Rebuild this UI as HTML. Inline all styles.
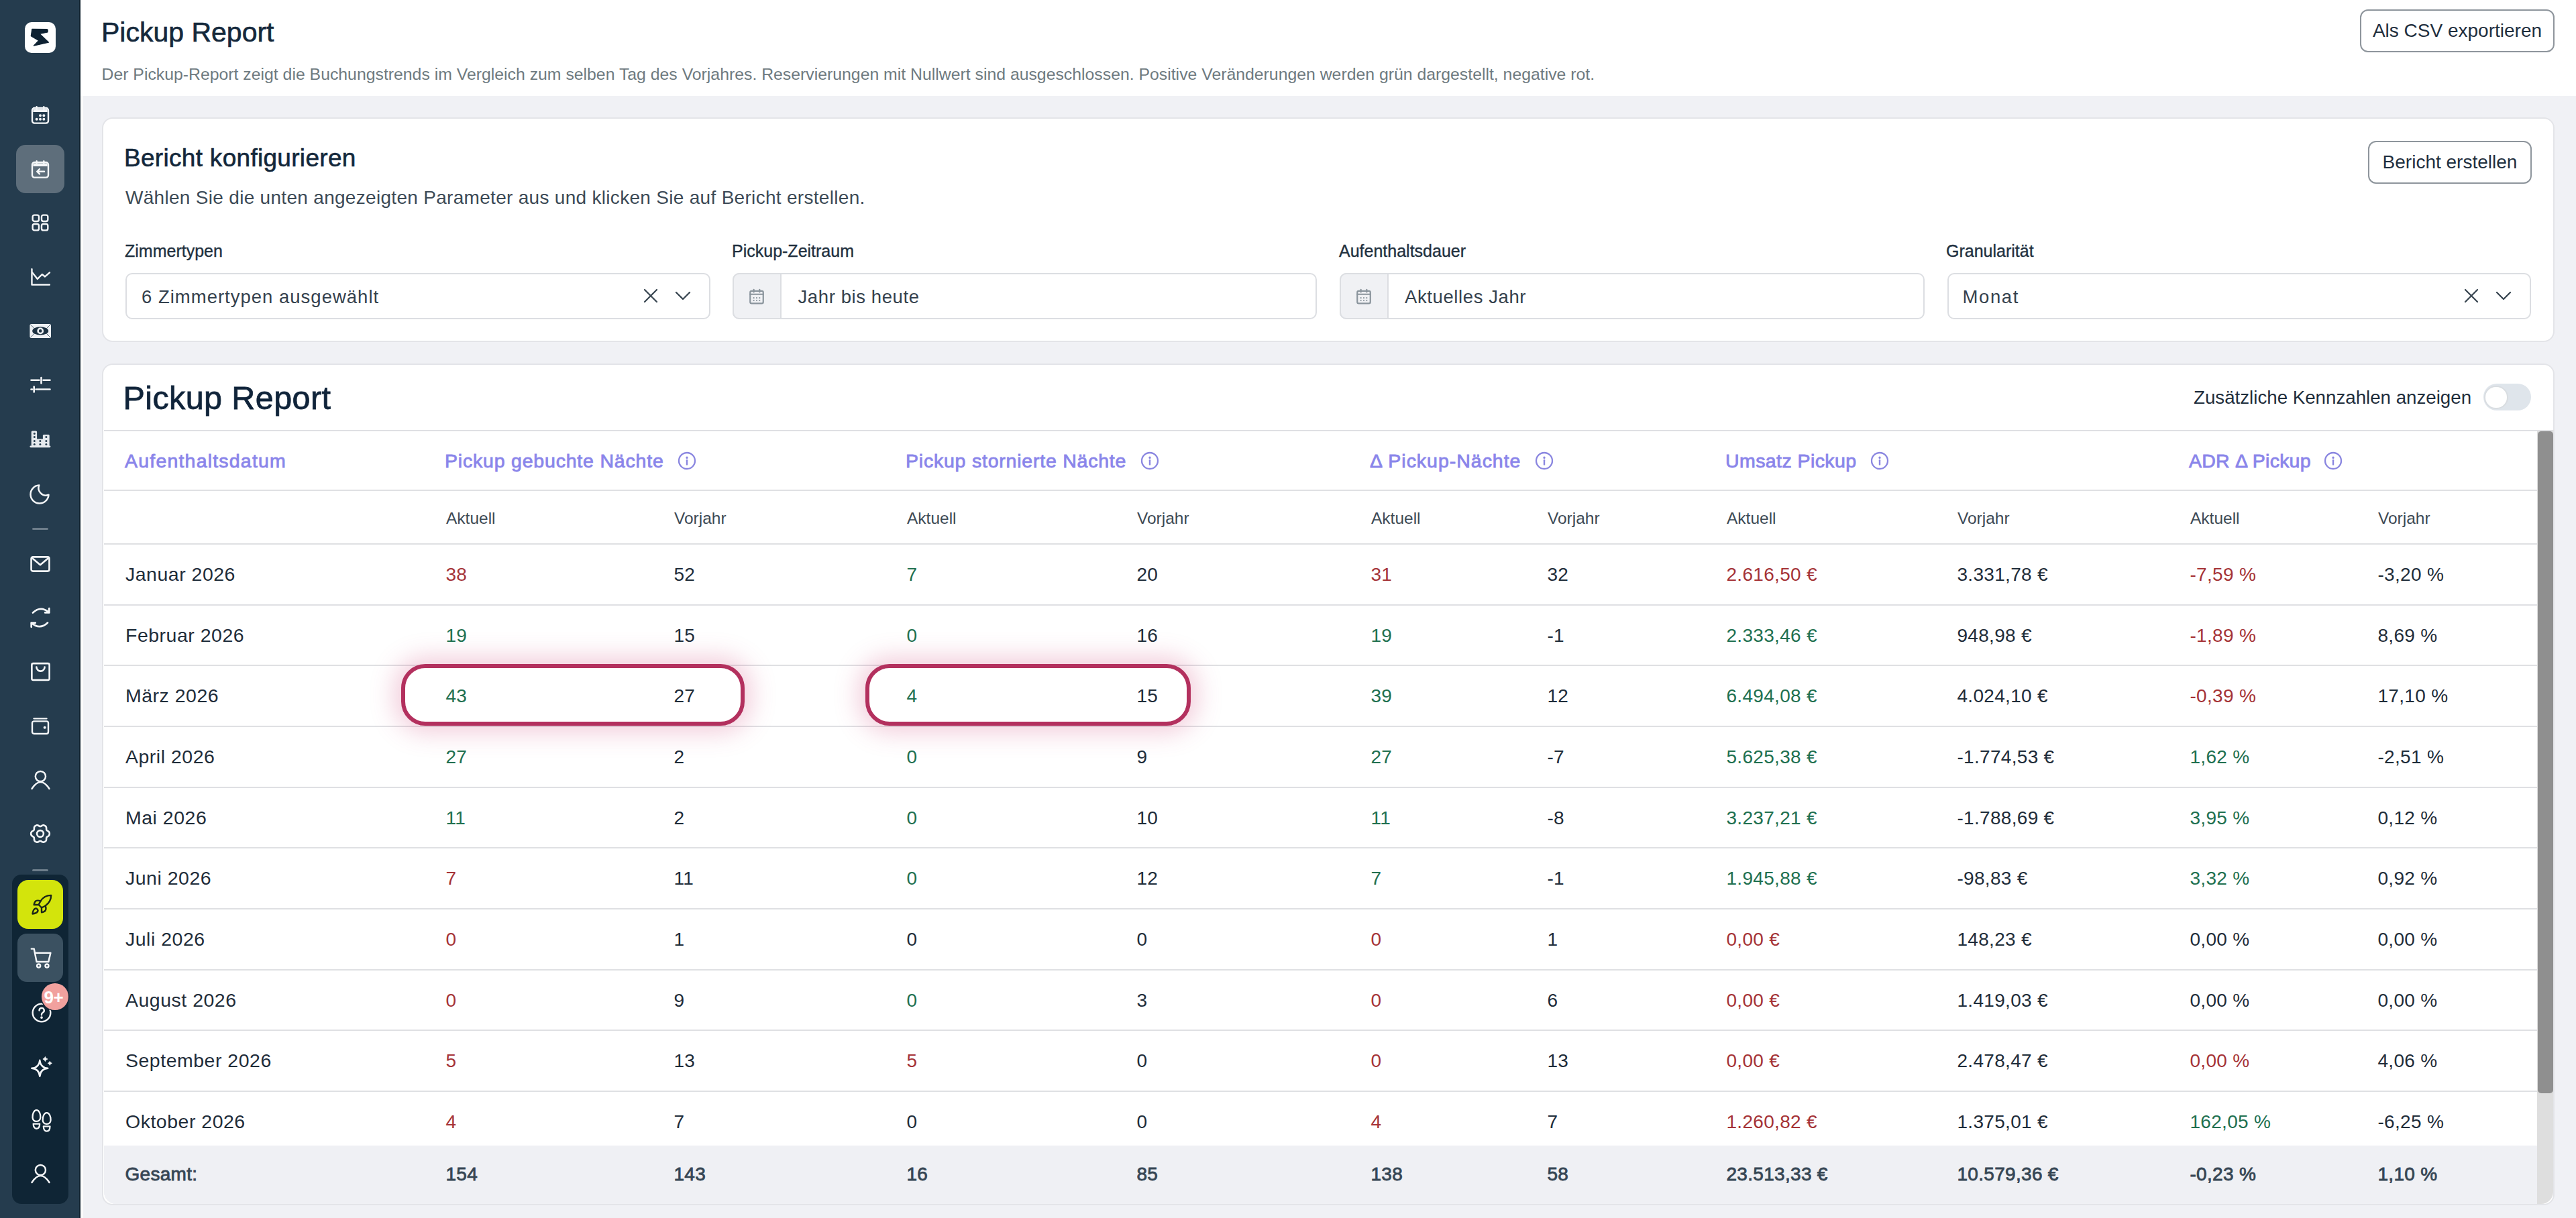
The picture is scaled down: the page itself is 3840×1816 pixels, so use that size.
<!DOCTYPE html>
<html><head><meta charset="utf-8"><title>Pickup Report</title>
<style>
html,body{margin:0;padding:0;}
body{width:3840px;height:1816px;position:relative;overflow:hidden;background:#f0f1f5;font-family:"Liberation Sans", sans-serif;}
.t{position:absolute;white-space:nowrap;}
.b{position:absolute;box-sizing:border-box;}
svg{position:absolute;overflow:visible;}
.med{-webkit-text-stroke:0.6px currentColor;}
.semi{-webkit-text-stroke:0.35px currentColor;}
.semib{-webkit-text-stroke:0.8px currentColor;}
</style></head><body>
<div class="b" style="left:0px;top:0px;width:120px;height:1816px;background:#253c4e;"></div>
<div class="b" style="left:118px;top:0px;width:2px;height:1816px;background:#10222f;"></div>
<div class="b" style="left:37px;top:33px;width:46px;height:46px;background:#fff;border-radius:10px;"></div>
<svg style="left:37px;top:33px" width="46" height="46" viewBox="0 0 46 46"><path d="M10.8 10.4 L33 10.6 Q34.3 10.8 34.2 12.4 L34 15 L22.2 17.5 L35.5 30.1 L13.3 35.2 L20.7 27.4 L9.3 20.7 Z" fill="#0e2232" stroke="#0e2232" stroke-width="1.2" stroke-linejoin="round"/></svg>
<div class="b" style="left:24px;top:216px;width:72px;height:72px;background:#5e6e7b;border-radius:14px;"></div>
<svg style="left:44.0px;top:155.0px" width="32" height="32" viewBox="0 0 24 24" fill="none" stroke="#f4f6f8" stroke-width="1.80" stroke-linecap="round" stroke-linejoin="round"><rect x="3" y="4.5" width="18" height="17" rx="2.5"/><path d="M4 7.3h16" stroke-width="3.4" stroke-linecap="butt"/><path d="M8 3.2v2M16 3.2v2"/><path d="M12 13h.01M16 13h.01M8 17h.01M12 17h.01M16 17h.01" stroke-width="3"/></svg>
<svg style="left:44.0px;top:236.0px" width="32" height="32" viewBox="0 0 24 24" fill="none" stroke="#f4f6f8" stroke-width="1.80" stroke-linecap="round" stroke-linejoin="round"><rect x="3" y="4.5" width="18" height="17" rx="2.5"/><path d="M4 7.3h16" stroke-width="3.4" stroke-linecap="butt"/><path d="M8 3.2v2M16 3.2v2"/><path d="M16.5 14.8H8.5M11.2 12 8.4 14.8l2.8 2.8"/></svg>
<svg style="left:44.0px;top:316.0px" width="32" height="32" viewBox="0 0 24 24" fill="none" stroke="#f4f6f8" stroke-width="1.80" stroke-linecap="round" stroke-linejoin="round"><rect x="3.5" y="3.5" width="7" height="7" rx="2"/><rect x="13.5" y="3.5" width="7" height="7" rx="2"/><rect x="3.5" y="13.5" width="7" height="7" rx="2"/><rect x="13.5" y="13.5" width="7" height="7" rx="2"/></svg>
<svg style="left:44.0px;top:397.0px" width="32" height="32" viewBox="0 0 24 24" fill="none" stroke="#f4f6f8" stroke-width="1.80" stroke-linecap="round" stroke-linejoin="round"><path d="M2.6 3.2v17.4h19.8"/><path d="M3.2 7.2l5.7 7 5.2-5.2 3.2 2.6 5.2-4.6"/></svg>
<svg style="left:40px;top:474px" width="40" height="40" viewBox="0 0 40 40"><rect x="4.4" y="9" width="31.6" height="21" rx="2.5" fill="#eef1f4"/><path d="M6 10.5l5 5M34.5 10.5l-5 5M6 28.5l5-5M34.5 28.5l-5-5" stroke="#253c4e" stroke-width="0.8"/><ellipse cx="20.2" cy="19.4" rx="12" ry="6.2" fill="#1d3242"/><circle cx="20.2" cy="19.4" r="3.6" fill="none" stroke="#eef1f4" stroke-width="2.6"/></svg>
<svg style="left:40px;top:554px" width="40" height="40" viewBox="0 0 40 40" fill="none" stroke="#f4f6f8" stroke-width="2.6" stroke-linecap="round"><path d="M6.5 12.7H18.5M24.5 12.7H34.5M21.5 9V17.5"/><path d="M6.5 26.5H8M13.5 26.5H34.5M10.7 22.5V30.5"/></svg>
<svg style="left:40px;top:636px" width="40" height="40" viewBox="0 0 40 40"><g fill="#e6eaee"><rect x="6.7" y="6.4" width="8.4" height="23" rx="1.5"/><rect x="14.7" y="18.5" width="9.6" height="11" rx="0.5"/><rect x="23.9" y="12" width="9.8" height="17.4" rx="1.5"/><rect x="4.4" y="28.4" width="31" height="2.8" rx="1.4"/></g><g fill="#253c4e"><circle cx="11.3" cy="10.4" r="1.5"/><circle cx="11.3" cy="15.6" r="1.5"/><circle cx="11.3" cy="21.4" r="1.5"/><circle cx="11.3" cy="26.4" r="1.5"/><circle cx="19.9" cy="21.4" r="1.5"/><circle cx="19.9" cy="26.4" r="1.5"/><circle cx="28.9" cy="15.6" r="1.5"/><circle cx="28.9" cy="21.4" r="1.5"/><circle cx="28.9" cy="26.4" r="1.5"/></g></svg>
<svg style="left:40px;top:717px" width="40" height="40" viewBox="0 0 40 40" fill="none" stroke="#f4f6f8" stroke-width="2.5" stroke-linejoin="round"><path d="M18.24 6.52A13.5 13.5 0 1 0 32.48 20.76A11 11 0 0 1 18.24 6.52Z"/></svg>
<div class="b" style="left:48px;top:787px;width:24px;height:3px;background:#6e7e8b;border-radius:2px;"></div>
<svg style="left:43.0px;top:823.5px" width="34" height="34" viewBox="0 0 24 24" fill="none" stroke="#f4f6f8" stroke-width="1.84" stroke-linecap="round" stroke-linejoin="round"><rect x="2.5" y="4.5" width="19" height="15" rx="1.8"/><path d="M3.2 5.5l8.8 7.3 8.8-7.3"/></svg>
<svg style="left:40px;top:901px" width="40" height="40" viewBox="0 0 40 40" fill="none" stroke="#f4f6f8" stroke-width="2.7" stroke-linecap="round" stroke-linejoin="round"><path d="M9 12.5Q20.5 1.5 33 12"/><path d="M33.3 6.2V12.4H27.2"/><path d="M31 27.5Q19.5 38.5 7 28"/><path d="M6.7 33.8V27.6H12.8"/></svg>
<svg style="left:42.5px;top:984.0px" width="35" height="35" viewBox="0 0 24 24" fill="none" stroke="#f4f6f8" stroke-width="1.78" stroke-linecap="round" stroke-linejoin="round"><rect x="3" y="3.5" width="18" height="17" rx="1.5"/><path d="M7.8 7.2a4.2 4.2 0 0 0 8.4 0"/></svg>
<svg style="left:44.0px;top:1066.0px" width="32" height="32" viewBox="0 0 24 24" fill="none" stroke="#f4f6f8" stroke-width="1.80" stroke-linecap="round" stroke-linejoin="round"><path d="M5 4h14"/><rect x="3" y="7" width="18" height="14" rx="2"/><path d="M17 14h.01" stroke-width="3"/></svg>
<svg style="left:40px;top:1143px" width="40" height="40" viewBox="0 0 40 40" fill="none" stroke="#f4f6f8" stroke-width="2.5" stroke-linecap="round"><circle cx="20.4" cy="14.5" r="7.6"/><path d="M7.5 33Q20.5 13 33.5 33"/></svg>
<svg style="left:39.8px;top:1223.3px" width="40" height="40" viewBox="0 0 40 40" fill="none" stroke="#f4f6f8" stroke-width="2.6" stroke-linejoin="round"><path d="M33.80 20.00 L33.79 20.48 L33.74 20.96 L33.64 21.43 L33.47 21.89 L33.23 22.33 L32.92 22.75 L32.55 23.13 L32.12 23.48 L31.66 23.79 L31.20 24.08 L30.75 24.34 L30.33 24.60 L29.96 24.86 L29.67 25.14 L29.44 25.45 L29.28 25.80 L29.19 26.20 L29.15 26.65 L29.13 27.13 L29.13 27.66 L29.11 28.21 L29.07 28.76 L28.98 29.30 L28.84 29.82 L28.64 30.29 L28.38 30.72 L28.06 31.10 L27.70 31.42 L27.31 31.70 L26.90 31.95 L26.48 32.18 L26.04 32.38 L25.58 32.53 L25.10 32.61 L24.60 32.63 L24.08 32.56 L23.56 32.43 L23.05 32.24 L22.55 32.00 L22.07 31.74 L21.61 31.48 L21.18 31.24 L20.77 31.06 L20.38 30.94 L20.00 30.90 L19.62 30.94 L19.23 31.06 L18.82 31.24 L18.39 31.48 L17.93 31.74 L17.45 32.00 L16.95 32.24 L16.44 32.43 L15.92 32.56 L15.40 32.63 L14.90 32.61 L14.42 32.53 L13.96 32.38 L13.52 32.18 L13.10 31.95 L12.69 31.70 L12.30 31.42 L11.94 31.10 L11.62 30.72 L11.36 30.29 L11.16 29.82 L11.02 29.30 L10.93 28.76 L10.89 28.21 L10.87 27.66 L10.87 27.13 L10.85 26.65 L10.81 26.20 L10.72 25.80 L10.56 25.45 L10.33 25.14 L10.04 24.86 L9.67 24.60 L9.25 24.34 L8.80 24.08 L8.34 23.79 L7.88 23.48 L7.45 23.13 L7.08 22.75 L6.77 22.33 L6.53 21.89 L6.36 21.43 L6.26 20.96 L6.21 20.48 L6.20 20.00 L6.21 19.52 L6.26 19.04 L6.36 18.57 L6.53 18.11 L6.77 17.67 L7.08 17.25 L7.45 16.87 L7.88 16.52 L8.34 16.21 L8.80 15.92 L9.25 15.66 L9.67 15.40 L10.04 15.14 L10.33 14.86 L10.56 14.55 L10.72 14.20 L10.81 13.80 L10.85 13.35 L10.87 12.87 L10.87 12.34 L10.89 11.79 L10.93 11.24 L11.02 10.70 L11.16 10.18 L11.36 9.71 L11.62 9.28 L11.94 8.90 L12.30 8.58 L12.69 8.30 L13.10 8.05 L13.52 7.82 L13.96 7.62 L14.42 7.47 L14.90 7.39 L15.40 7.37 L15.92 7.44 L16.44 7.57 L16.95 7.76 L17.45 8.00 L17.93 8.26 L18.39 8.52 L18.82 8.76 L19.23 8.94 L19.62 9.06 L20.00 9.10 L20.38 9.06 L20.77 8.94 L21.18 8.76 L21.61 8.52 L22.07 8.26 L22.55 8.00 L23.05 7.76 L23.56 7.57 L24.08 7.44 L24.60 7.37 L25.10 7.39 L25.58 7.47 L26.04 7.62 L26.48 7.82 L26.90 8.05 L27.31 8.30 L27.70 8.58 L28.06 8.90 L28.38 9.28 L28.64 9.71 L28.84 10.18 L28.98 10.70 L29.07 11.24 L29.11 11.79 L29.13 12.34 L29.13 12.87 L29.15 13.35 L29.19 13.80 L29.28 14.20 L29.44 14.55 L29.67 14.86 L29.96 15.14 L30.33 15.40 L30.75 15.66 L31.20 15.92 L31.66 16.21 L32.12 16.52 L32.55 16.87 L32.92 17.25 L33.23 17.67 L33.47 18.11 L33.64 18.57 L33.74 19.04 L33.79 19.52 L33.80 20.00Z"/><circle cx="20" cy="20" r="4.9"/></svg>
<div class="b" style="left:48px;top:1296px;width:24px;height:3px;background:#6e7e8b;border-radius:2px;"></div>
<div class="b" style="left:18px;top:1304px;width:84px;height:491px;background:#0f2535;border-radius:14px;"></div>
<div class="b" style="left:26px;top:1312px;width:68px;height:73px;background:#d3e40c;border-radius:16px;"></div>
<svg style="left:44.5px;top:1331.5px" width="34" height="34" viewBox="0 0 24 24" fill="none" stroke="#1c2618" stroke-width="1.69" stroke-linecap="round" stroke-linejoin="round"><path d="M4.5 16.5c-1.5 1.26-2 5-2 5s3.74-.5 5-2c.71-.84.7-2.13-.09-2.91a2.18 2.18 0 0 0-2.91-.09z"/><path d="M12 15l-3-3a22 22 0 0 1 2-3.95A12.88 12.88 0 0 1 22 2c0 2.72-.78 7.5-6 11a22.35 22.35 0 0 1-4 2z"/><path d="M9 12H4s.55-3.03 2-4c1.62-1.08 5 0 5 0"/><path d="M12 15v5s3.03-.55 4-2c1.08-1.62 0-5 0-5"/></svg>
<div class="b" style="left:26px;top:1392px;width:68px;height:72px;background:#3b5161;border-radius:14px;"></div>
<svg style="left:42.5px;top:1409.5px" width="37" height="37" viewBox="0 0 24 24" fill="none" stroke="#f4f6f8" stroke-width="1.62" stroke-linecap="round" stroke-linejoin="round"><path d="M2.5 3h2.5l2.5 12.5h11.5l2-8.5H6"/><circle cx="9.5" cy="19.5" r="1.6"/><circle cx="17.5" cy="19.5" r="1.6"/></svg>
<svg style="left:46.0px;top:1494.0px" width="32" height="32" viewBox="0 0 24 24" fill="none" stroke="#f4f6f8" stroke-width="1.80" stroke-linecap="round" stroke-linejoin="round"><circle cx="12" cy="12" r="10"/><path d="M9.4 9.4a2.7 2.7 0 1 1 3.9 2.4c-.8.5-1.3 1.1-1.3 2v.6"/><path d="M12 17.3v.01" stroke-width="2.8"/></svg>
<div class="b" style="left:62px;top:1466px;width:40px;height:40px;background:#f1a19e;border-radius:20px;box-shadow:0 0 0 1.5px #0f2535;"></div>
<div class="t" style="left:65.5px;top:1474.0px;font-size:26px;line-height:26px;color:#fff;font-weight:700;letter-spacing:-0.5px;">9+</div>
<svg style="left:40px;top:1570px" width="40" height="40" viewBox="0 0 40 40" fill="none" stroke="#f4f6f8" stroke-width="2.4" stroke-linejoin="round"><path d="M19.3 10.8Q20.3 21.8 31.3 22.8Q20.3 23.8 19.3 34.8Q18.3 23.8 7.3 22.8Q18.3 21.8 19.3 10.8Z"/><path d="M27.4 5.5Q27.9 8.5 30.9 9Q27.9 9.5 27.4 12.5Q26.9 9.5 23.9 9Q26.9 8.5 27.4 5.5Z" fill="#f4f6f8" stroke-width="1"/><path d="M34.3 12.3Q34.7 14.9 37.3 15.3Q34.7 15.7 34.3 18.3Q33.9 15.7 31.3 15.3Q33.9 14.9 34.3 12.3Z" fill="#f4f6f8" stroke-width="1"/></svg>
<svg style="left:45.0px;top:1654.0px" width="34" height="34" viewBox="0 0 24 24" fill="none" stroke="#f4f6f8" stroke-width="1.62" stroke-linecap="round" stroke-linejoin="round"><path d="M6.65 0.8C9.5 0.8 11 5 10.8 8.5C10.6 11.2 9 12.6 6.65 12.6C4.3 12.6 2.7 11.2 2.5 8.5C2.3 5 3.8 0.8 6.65 0.8Z"/><path d="M3.3 15.2H10C10 18.5 8.6 20.3 6.65 20.3C4.7 20.3 3.3 18.5 3.3 15.2Z"/><path d="M17.4 3.6C20.2 3.6 21.8 7.8 21.6 11.3C21.4 14 19.8 15.4 17.4 15.4C15 15.4 13.4 14 13.2 11.3C13 7.8 14.6 3.6 17.4 3.6Z"/><path d="M14 17.9H20.8C20.8 21.3 19.3 23.1 17.4 23.1C15.5 23.1 14 21.3 14 17.9Z"/></svg>
<svg style="left:40px;top:1730px" width="40" height="40" viewBox="0 0 40 40" fill="none" stroke="#f4f6f8" stroke-width="2.5" stroke-linecap="round"><circle cx="20.4" cy="14.5" r="7.6"/><path d="M7.5 33Q20.5 13 33.5 33"/></svg>
<div class="b" style="left:120px;top:0px;width:3720px;height:143px;background:#fff;"></div>
<div class="b" style="left:120px;top:143px;width:4px;height:1673px;background:#fbfbfb;"></div>
<div class="t med" style="left:151.0px;top:28.1px;font-size:41px;line-height:41px;color:#14283b;">Pickup Report</div>
<div class="t" style="left:151.5px;top:98.8px;font-size:24.8px;line-height:24.8px;color:#6e7a80;">Der Pickup-Report zeigt die Buchungstrends im Vergleich zum selben Tag des Vorjahres. Reservierungen mit Nullwert sind ausgeschlossen. Positive Veränderungen werden grün dargestellt, negative rot.</div>
<div class="b" style="left:3518px;top:14px;width:290px;height:64px;border:2px solid #8e959c;border-radius:12px;background:#fff;"></div>
<div class="t" style="left:3518px;top:14px;width:290px;height:64px;line-height:64px;text-align:center;font-size:28px;color:#1f2f3e;">Als CSV exportieren</div>
<div class="b" style="left:152px;top:175px;width:3656px;height:335px;background:#fff;border:2px solid #e3e4e8;border-radius:16px;"></div>
<div class="t med" style="left:185.0px;top:216.7px;font-size:37px;line-height:37px;color:#14283b;letter-spacing:0.3px;">Bericht konfigurieren</div>
<div class="t" style="left:187.0px;top:281.3px;font-size:28px;line-height:28px;color:#3c4a56;letter-spacing:0.3px;">Wählen Sie die unten angezeigten Parameter aus und klicken Sie auf Bericht erstellen.</div>
<div class="b" style="left:3530px;top:210px;width:244px;height:64px;border:2px solid #8e959c;border-radius:12px;background:#fff;"></div>
<div class="t" style="left:3530px;top:210px;width:244px;height:64px;line-height:64px;text-align:center;font-size:28px;color:#1f2f3e;">Bericht erstellen</div>
<div class="t semi" style="left:186.0px;top:362.1px;font-size:25px;line-height:25px;color:#22313f;">Zimmertypen</div>
<div class="t semi" style="left:1091.0px;top:362.1px;font-size:25px;line-height:25px;color:#22313f;">Pickup-Zeitraum</div>
<div class="t semi" style="left:1996.0px;top:362.1px;font-size:25px;line-height:25px;color:#22313f;">Aufenthaltsdauer</div>
<div class="t semi" style="left:2901.0px;top:362.1px;font-size:25px;line-height:25px;color:#22313f;">Granularität</div>
<div class="b" style="left:187px;top:407px;width:872px;height:68.5px;background:#fff;border:2px solid #dcdee2;border-radius:10px;"></div>
<div class="b" style="left:1092px;top:407px;width:871px;height:68.5px;background:#fff;border:2px solid #dcdee2;border-radius:10px;"></div>
<div class="b" style="left:1092px;top:407px;width:73px;height:68.5px;background:#f0f1f4;border:2px solid #dcdee2;border-radius:10px 0 0 10px;"></div>
<svg style="left:1115px;top:429px" width="26" height="26" viewBox="0 0 24 24" fill="none" stroke="#8a949c" stroke-width="2" stroke-linecap="round"><rect x="3" y="4.5" width="18" height="17" rx="2"/><path d="M3 9h18M8 2.5v3.5M16 2.5v3.5M8 14h.01M12 14h.01M16 14h.01M8 17.5h.01M12 17.5h.01M16 17.5h.01"/></svg>
<div class="b" style="left:1997px;top:407px;width:872px;height:68.5px;background:#fff;border:2px solid #dcdee2;border-radius:10px;"></div>
<div class="b" style="left:1997px;top:407px;width:73px;height:68.5px;background:#f0f1f4;border:2px solid #dcdee2;border-radius:10px 0 0 10px;"></div>
<svg style="left:2020px;top:429px" width="26" height="26" viewBox="0 0 24 24" fill="none" stroke="#8a949c" stroke-width="2" stroke-linecap="round"><rect x="3" y="4.5" width="18" height="17" rx="2"/><path d="M3 9h18M8 2.5v3.5M16 2.5v3.5M8 14h.01M12 14h.01M16 14h.01M8 17.5h.01M12 17.5h.01M16 17.5h.01"/></svg>
<div class="b" style="left:2903px;top:407px;width:870px;height:68.5px;background:#fff;border:2px solid #dcdee2;border-radius:10px;"></div>
<div class="t" style="left:211.0px;top:428.7px;font-size:27.5px;line-height:27.5px;color:#34414d;letter-spacing:1.0px;">6 Zimmertypen ausgewählt</div>
<svg style="left:959px;top:430px" width="22" height="22" viewBox="0 0 22 22" fill="none" stroke="#3a4752" stroke-width="2.3" stroke-linecap="round"><path d="M2 2l18 18M20 2L2 20"/></svg>
<svg style="left:1006px;top:434px" width="24" height="14" viewBox="0 0 24 14" fill="none" stroke="#3a4752" stroke-width="2.3" stroke-linecap="round" stroke-linejoin="round"><path d="M2 2l10 10 10-10"/></svg>
<div class="t" style="left:1189.5px;top:428.7px;font-size:27.5px;line-height:27.5px;color:#34414d;letter-spacing:0.6px;">Jahr bis heute</div>
<div class="t" style="left:2094.0px;top:428.7px;font-size:27.5px;line-height:27.5px;color:#34414d;letter-spacing:0.6px;">Aktuelles Jahr</div>
<div class="t" style="left:2925.5px;top:428.7px;font-size:27.5px;line-height:27.5px;color:#34414d;letter-spacing:1.6px;">Monat</div>
<svg style="left:3673px;top:430px" width="22" height="22" viewBox="0 0 22 22" fill="none" stroke="#3a4752" stroke-width="2.3" stroke-linecap="round"><path d="M2 2l18 18M20 2L2 20"/></svg>
<svg style="left:3720px;top:434px" width="24" height="14" viewBox="0 0 24 14" fill="none" stroke="#3a4752" stroke-width="2.3" stroke-linecap="round" stroke-linejoin="round"><path d="M2 2l10 10 10-10"/></svg>
<div class="b" style="left:152px;top:542px;width:3656px;height:1255px;background:#fff;border:2px solid #e3e4e8;border-radius:16px;overflow:hidden;"></div>
<div class="t semib" style="left:183.5px;top:568.9px;font-size:48.5px;line-height:48.5px;color:#10243a;letter-spacing:0.4px;">Pickup Report</div>
<div class="t" style="left:3270.0px;top:579.0px;font-size:27.7px;line-height:27.7px;color:#1f2e3c;">Zusätzliche Kennzahlen anzeigen</div>
<div class="b" style="left:3702px;top:572px;width:71px;height:40px;background:#dfe5eb;border-radius:20px;"></div>
<div class="b" style="left:3703px;top:574.5px;width:35.5px;height:35.5px;background:#fff;border:2px solid #d9dde1;border-radius:18px;"></div>
<div class="b" style="left:155px;top:1708px;width:3628px;height:87px;background:#eff0f4;border-radius:0 0 0 18px;"></div>
<div class="b" style="left:155px;top:641.0px;width:3652px;height:2px;background:#dfe0e3;"></div>
<div class="b" style="left:155px;top:729.5px;width:3627px;height:2px;background:#dfe0e3;"></div>
<div class="b" style="left:155px;top:810.0px;width:3627px;height:2px;background:#dfe0e3;"></div>
<div class="b" style="left:155px;top:900.7px;width:3627px;height:2px;background:#dfe0e3;"></div>
<div class="b" style="left:155px;top:991.3px;width:3627px;height:2px;background:#dfe0e3;"></div>
<div class="b" style="left:155px;top:1082.0px;width:3627px;height:2px;background:#dfe0e3;"></div>
<div class="b" style="left:155px;top:1172.7px;width:3627px;height:2px;background:#dfe0e3;"></div>
<div class="b" style="left:155px;top:1263.3px;width:3627px;height:2px;background:#dfe0e3;"></div>
<div class="b" style="left:155px;top:1354.0px;width:3627px;height:2px;background:#dfe0e3;"></div>
<div class="b" style="left:155px;top:1444.7px;width:3627px;height:2px;background:#dfe0e3;"></div>
<div class="b" style="left:155px;top:1535.4px;width:3627px;height:2px;background:#dfe0e3;"></div>
<div class="b" style="left:155px;top:1626.0px;width:3627px;height:2px;background:#dfe0e3;"></div>
<div class="t semib" style="left:186.0px;top:673.4px;font-size:28.5px;line-height:28.5px;color:#8a85ea;letter-spacing:1.2px;">Aufenthaltsdatum</div>
<div class="t semib" style="left:663.0px;top:673.4px;font-size:28.5px;line-height:28.5px;color:#8a85ea;letter-spacing:0.8px;">Pickup gebuchte Nächte</div>
<svg style="left:1011px;top:674.3px" width="26" height="26" viewBox="0 0 26 26" fill="none" stroke="#8a86e0" stroke-width="2.3" stroke-linecap="round"><circle cx="13" cy="13" r="12"/><path d="M13 12.2v6.3" stroke-width="2.4"/><path d="M13 8.2v.2" stroke-width="3.2"/></svg>
<div class="t semib" style="left:1350.0px;top:673.4px;font-size:28.5px;line-height:28.5px;color:#8a85ea;letter-spacing:0.78px;">Pickup stornierte Nächte</div>
<svg style="left:1701px;top:674.3px" width="26" height="26" viewBox="0 0 26 26" fill="none" stroke="#8a86e0" stroke-width="2.3" stroke-linecap="round"><circle cx="13" cy="13" r="12"/><path d="M13 12.2v6.3" stroke-width="2.4"/><path d="M13 8.2v.2" stroke-width="3.2"/></svg>
<div class="t semib" style="left:2042.0px;top:673.4px;font-size:28.5px;line-height:28.5px;color:#8a85ea;letter-spacing:0.98px;">Δ Pickup-Nächte</div>
<svg style="left:2289px;top:674.3px" width="26" height="26" viewBox="0 0 26 26" fill="none" stroke="#8a86e0" stroke-width="2.3" stroke-linecap="round"><circle cx="13" cy="13" r="12"/><path d="M13 12.2v6.3" stroke-width="2.4"/><path d="M13 8.2v.2" stroke-width="3.2"/></svg>
<div class="t semib" style="left:2572.0px;top:673.4px;font-size:28.5px;line-height:28.5px;color:#8a85ea;letter-spacing:0.42px;">Umsatz Pickup</div>
<svg style="left:2789px;top:674.3px" width="26" height="26" viewBox="0 0 26 26" fill="none" stroke="#8a86e0" stroke-width="2.3" stroke-linecap="round"><circle cx="13" cy="13" r="12"/><path d="M13 12.2v6.3" stroke-width="2.4"/><path d="M13 8.2v.2" stroke-width="3.2"/></svg>
<div class="t semib" style="left:3263.0px;top:673.4px;font-size:28.5px;line-height:28.5px;color:#8a85ea;letter-spacing:0.23px;">ADR Δ Pickup</div>
<svg style="left:3465px;top:674.3px" width="26" height="26" viewBox="0 0 26 26" fill="none" stroke="#8a86e0" stroke-width="2.3" stroke-linecap="round"><circle cx="13" cy="13" r="12"/><path d="M13 12.2v6.3" stroke-width="2.4"/><path d="M13 8.2v.2" stroke-width="3.2"/></svg>
<div class="t" style="left:665.0px;top:761.3px;font-size:24.5px;line-height:24.5px;color:#3d4a55;">Aktuell</div>
<div class="t" style="left:1005.0px;top:761.3px;font-size:24.5px;line-height:24.5px;color:#3d4a55;">Vorjahr</div>
<div class="t" style="left:1352.0px;top:761.3px;font-size:24.5px;line-height:24.5px;color:#3d4a55;">Aktuell</div>
<div class="t" style="left:1695.0px;top:761.3px;font-size:24.5px;line-height:24.5px;color:#3d4a55;">Vorjahr</div>
<div class="t" style="left:2044.0px;top:761.3px;font-size:24.5px;line-height:24.5px;color:#3d4a55;">Aktuell</div>
<div class="t" style="left:2307.0px;top:761.3px;font-size:24.5px;line-height:24.5px;color:#3d4a55;">Vorjahr</div>
<div class="t" style="left:2574.0px;top:761.3px;font-size:24.5px;line-height:24.5px;color:#3d4a55;">Aktuell</div>
<div class="t" style="left:2918.0px;top:761.3px;font-size:24.5px;line-height:24.5px;color:#3d4a55;">Vorjahr</div>
<div class="t" style="left:3265.0px;top:761.3px;font-size:24.5px;line-height:24.5px;color:#3d4a55;">Aktuell</div>
<div class="t" style="left:3545.0px;top:761.3px;font-size:24.5px;line-height:24.5px;color:#3d4a55;">Vorjahr</div>
<div class="b" style="left:598px;top:990px;width:512px;height:92px;background:#fff;border:6px solid #b3305e;border-radius:36px;box-shadow:0 0 36px 10px rgba(205,60,115,0.26);"></div>
<div class="b" style="left:1290px;top:990px;width:485px;height:92px;background:#fff;border:6px solid #b3305e;border-radius:36px;box-shadow:0 0 36px 10px rgba(205,60,115,0.26);"></div>
<div class="t" style="left:187.0px;top:842.1px;font-size:28.5px;line-height:28.5px;color:#1f2d3a;letter-spacing:0.5px;">Januar 2026</div>
<div class="t" style="left:664.5px;top:842.8px;font-size:28px;line-height:28px;color:#a53337;letter-spacing:0.3px;">38</div>
<div class="t" style="left:1004.5px;top:842.8px;font-size:28px;line-height:28px;color:#1f2d3a;letter-spacing:0.3px;">52</div>
<div class="t" style="left:1351.5px;top:842.8px;font-size:28px;line-height:28px;color:#217050;letter-spacing:0.3px;">7</div>
<div class="t" style="left:1694.5px;top:842.8px;font-size:28px;line-height:28px;color:#1f2d3a;letter-spacing:0.3px;">20</div>
<div class="t" style="left:2043.5px;top:842.8px;font-size:28px;line-height:28px;color:#a53337;letter-spacing:0.3px;">31</div>
<div class="t" style="left:2306.5px;top:842.8px;font-size:28px;line-height:28px;color:#1f2d3a;letter-spacing:0.3px;">32</div>
<div class="t" style="left:2573.5px;top:842.8px;font-size:28px;line-height:28px;color:#a53337;letter-spacing:0.3px;">2.616,50 €</div>
<div class="t" style="left:2917.5px;top:842.8px;font-size:28px;line-height:28px;color:#1f2d3a;letter-spacing:0.3px;">3.331,78 €</div>
<div class="t" style="left:3264.5px;top:842.8px;font-size:28px;line-height:28px;color:#a53337;letter-spacing:0.3px;">-7,59 %</div>
<div class="t" style="left:3544.5px;top:842.8px;font-size:28px;line-height:28px;color:#1f2d3a;letter-spacing:0.3px;">-3,20 %</div>
<div class="t" style="left:187.0px;top:932.7px;font-size:28.5px;line-height:28.5px;color:#1f2d3a;letter-spacing:0.5px;">Februar 2026</div>
<div class="t" style="left:664.5px;top:933.5px;font-size:28px;line-height:28px;color:#217050;letter-spacing:0.3px;">19</div>
<div class="t" style="left:1004.5px;top:933.5px;font-size:28px;line-height:28px;color:#1f2d3a;letter-spacing:0.3px;">15</div>
<div class="t" style="left:1351.5px;top:933.5px;font-size:28px;line-height:28px;color:#217050;letter-spacing:0.3px;">0</div>
<div class="t" style="left:1694.5px;top:933.5px;font-size:28px;line-height:28px;color:#1f2d3a;letter-spacing:0.3px;">16</div>
<div class="t" style="left:2043.5px;top:933.5px;font-size:28px;line-height:28px;color:#217050;letter-spacing:0.3px;">19</div>
<div class="t" style="left:2306.5px;top:933.5px;font-size:28px;line-height:28px;color:#1f2d3a;letter-spacing:0.3px;">-1</div>
<div class="t" style="left:2573.5px;top:933.5px;font-size:28px;line-height:28px;color:#217050;letter-spacing:0.3px;">2.333,46 €</div>
<div class="t" style="left:2917.5px;top:933.5px;font-size:28px;line-height:28px;color:#1f2d3a;letter-spacing:0.3px;">948,98 €</div>
<div class="t" style="left:3264.5px;top:933.5px;font-size:28px;line-height:28px;color:#a53337;letter-spacing:0.3px;">-1,89 %</div>
<div class="t" style="left:3544.5px;top:933.5px;font-size:28px;line-height:28px;color:#1f2d3a;letter-spacing:0.3px;">8,69 %</div>
<div class="t" style="left:187.0px;top:1023.4px;font-size:28.5px;line-height:28.5px;color:#1f2d3a;letter-spacing:0.5px;">März 2026</div>
<div class="t" style="left:664.5px;top:1024.1px;font-size:28px;line-height:28px;color:#217050;letter-spacing:0.3px;">43</div>
<div class="t" style="left:1004.5px;top:1024.1px;font-size:28px;line-height:28px;color:#1f2d3a;letter-spacing:0.3px;">27</div>
<div class="t" style="left:1351.5px;top:1024.1px;font-size:28px;line-height:28px;color:#217050;letter-spacing:0.3px;">4</div>
<div class="t" style="left:1694.5px;top:1024.1px;font-size:28px;line-height:28px;color:#1f2d3a;letter-spacing:0.3px;">15</div>
<div class="t" style="left:2043.5px;top:1024.1px;font-size:28px;line-height:28px;color:#217050;letter-spacing:0.3px;">39</div>
<div class="t" style="left:2306.5px;top:1024.1px;font-size:28px;line-height:28px;color:#1f2d3a;letter-spacing:0.3px;">12</div>
<div class="t" style="left:2573.5px;top:1024.1px;font-size:28px;line-height:28px;color:#217050;letter-spacing:0.3px;">6.494,08 €</div>
<div class="t" style="left:2917.5px;top:1024.1px;font-size:28px;line-height:28px;color:#1f2d3a;letter-spacing:0.3px;">4.024,10 €</div>
<div class="t" style="left:3264.5px;top:1024.1px;font-size:28px;line-height:28px;color:#a53337;letter-spacing:0.3px;">-0,39 %</div>
<div class="t" style="left:3544.5px;top:1024.1px;font-size:28px;line-height:28px;color:#1f2d3a;letter-spacing:0.3px;">17,10 %</div>
<div class="t" style="left:187.0px;top:1114.1px;font-size:28.5px;line-height:28.5px;color:#1f2d3a;letter-spacing:0.5px;">April 2026</div>
<div class="t" style="left:664.5px;top:1114.8px;font-size:28px;line-height:28px;color:#217050;letter-spacing:0.3px;">27</div>
<div class="t" style="left:1004.5px;top:1114.8px;font-size:28px;line-height:28px;color:#1f2d3a;letter-spacing:0.3px;">2</div>
<div class="t" style="left:1351.5px;top:1114.8px;font-size:28px;line-height:28px;color:#217050;letter-spacing:0.3px;">0</div>
<div class="t" style="left:1694.5px;top:1114.8px;font-size:28px;line-height:28px;color:#1f2d3a;letter-spacing:0.3px;">9</div>
<div class="t" style="left:2043.5px;top:1114.8px;font-size:28px;line-height:28px;color:#217050;letter-spacing:0.3px;">27</div>
<div class="t" style="left:2306.5px;top:1114.8px;font-size:28px;line-height:28px;color:#1f2d3a;letter-spacing:0.3px;">-7</div>
<div class="t" style="left:2573.5px;top:1114.8px;font-size:28px;line-height:28px;color:#217050;letter-spacing:0.3px;">5.625,38 €</div>
<div class="t" style="left:2917.5px;top:1114.8px;font-size:28px;line-height:28px;color:#1f2d3a;letter-spacing:0.3px;">-1.774,53 €</div>
<div class="t" style="left:3264.5px;top:1114.8px;font-size:28px;line-height:28px;color:#217050;letter-spacing:0.3px;">1,62 %</div>
<div class="t" style="left:3544.5px;top:1114.8px;font-size:28px;line-height:28px;color:#1f2d3a;letter-spacing:0.3px;">-2,51 %</div>
<div class="t" style="left:187.0px;top:1204.8px;font-size:28.5px;line-height:28.5px;color:#1f2d3a;letter-spacing:0.5px;">Mai 2026</div>
<div class="t" style="left:664.5px;top:1205.5px;font-size:28px;line-height:28px;color:#217050;letter-spacing:0.3px;">11</div>
<div class="t" style="left:1004.5px;top:1205.5px;font-size:28px;line-height:28px;color:#1f2d3a;letter-spacing:0.3px;">2</div>
<div class="t" style="left:1351.5px;top:1205.5px;font-size:28px;line-height:28px;color:#217050;letter-spacing:0.3px;">0</div>
<div class="t" style="left:1694.5px;top:1205.5px;font-size:28px;line-height:28px;color:#1f2d3a;letter-spacing:0.3px;">10</div>
<div class="t" style="left:2043.5px;top:1205.5px;font-size:28px;line-height:28px;color:#217050;letter-spacing:0.3px;">11</div>
<div class="t" style="left:2306.5px;top:1205.5px;font-size:28px;line-height:28px;color:#1f2d3a;letter-spacing:0.3px;">-8</div>
<div class="t" style="left:2573.5px;top:1205.5px;font-size:28px;line-height:28px;color:#217050;letter-spacing:0.3px;">3.237,21 €</div>
<div class="t" style="left:2917.5px;top:1205.5px;font-size:28px;line-height:28px;color:#1f2d3a;letter-spacing:0.3px;">-1.788,69 €</div>
<div class="t" style="left:3264.5px;top:1205.5px;font-size:28px;line-height:28px;color:#217050;letter-spacing:0.3px;">3,95 %</div>
<div class="t" style="left:3544.5px;top:1205.5px;font-size:28px;line-height:28px;color:#1f2d3a;letter-spacing:0.3px;">0,12 %</div>
<div class="t" style="left:187.0px;top:1295.4px;font-size:28.5px;line-height:28.5px;color:#1f2d3a;letter-spacing:0.5px;">Juni 2026</div>
<div class="t" style="left:664.5px;top:1296.1px;font-size:28px;line-height:28px;color:#a53337;letter-spacing:0.3px;">7</div>
<div class="t" style="left:1004.5px;top:1296.1px;font-size:28px;line-height:28px;color:#1f2d3a;letter-spacing:0.3px;">11</div>
<div class="t" style="left:1351.5px;top:1296.1px;font-size:28px;line-height:28px;color:#217050;letter-spacing:0.3px;">0</div>
<div class="t" style="left:1694.5px;top:1296.1px;font-size:28px;line-height:28px;color:#1f2d3a;letter-spacing:0.3px;">12</div>
<div class="t" style="left:2043.5px;top:1296.1px;font-size:28px;line-height:28px;color:#217050;letter-spacing:0.3px;">7</div>
<div class="t" style="left:2306.5px;top:1296.1px;font-size:28px;line-height:28px;color:#1f2d3a;letter-spacing:0.3px;">-1</div>
<div class="t" style="left:2573.5px;top:1296.1px;font-size:28px;line-height:28px;color:#217050;letter-spacing:0.3px;">1.945,88 €</div>
<div class="t" style="left:2917.5px;top:1296.1px;font-size:28px;line-height:28px;color:#1f2d3a;letter-spacing:0.3px;">-98,83 €</div>
<div class="t" style="left:3264.5px;top:1296.1px;font-size:28px;line-height:28px;color:#217050;letter-spacing:0.3px;">3,32 %</div>
<div class="t" style="left:3544.5px;top:1296.1px;font-size:28px;line-height:28px;color:#1f2d3a;letter-spacing:0.3px;">0,92 %</div>
<div class="t" style="left:187.0px;top:1386.1px;font-size:28.5px;line-height:28.5px;color:#1f2d3a;letter-spacing:0.5px;">Juli 2026</div>
<div class="t" style="left:664.5px;top:1386.8px;font-size:28px;line-height:28px;color:#a53337;letter-spacing:0.3px;">0</div>
<div class="t" style="left:1004.5px;top:1386.8px;font-size:28px;line-height:28px;color:#1f2d3a;letter-spacing:0.3px;">1</div>
<div class="t" style="left:1351.5px;top:1386.8px;font-size:28px;line-height:28px;color:#1f2d3a;letter-spacing:0.3px;">0</div>
<div class="t" style="left:1694.5px;top:1386.8px;font-size:28px;line-height:28px;color:#1f2d3a;letter-spacing:0.3px;">0</div>
<div class="t" style="left:2043.5px;top:1386.8px;font-size:28px;line-height:28px;color:#a53337;letter-spacing:0.3px;">0</div>
<div class="t" style="left:2306.5px;top:1386.8px;font-size:28px;line-height:28px;color:#1f2d3a;letter-spacing:0.3px;">1</div>
<div class="t" style="left:2573.5px;top:1386.8px;font-size:28px;line-height:28px;color:#a53337;letter-spacing:0.3px;">0,00 €</div>
<div class="t" style="left:2917.5px;top:1386.8px;font-size:28px;line-height:28px;color:#1f2d3a;letter-spacing:0.3px;">148,23 €</div>
<div class="t" style="left:3264.5px;top:1386.8px;font-size:28px;line-height:28px;color:#1f2d3a;letter-spacing:0.3px;">0,00 %</div>
<div class="t" style="left:3544.5px;top:1386.8px;font-size:28px;line-height:28px;color:#1f2d3a;letter-spacing:0.3px;">0,00 %</div>
<div class="t" style="left:187.0px;top:1476.8px;font-size:28.5px;line-height:28.5px;color:#1f2d3a;letter-spacing:0.5px;">August 2026</div>
<div class="t" style="left:664.5px;top:1477.5px;font-size:28px;line-height:28px;color:#a53337;letter-spacing:0.3px;">0</div>
<div class="t" style="left:1004.5px;top:1477.5px;font-size:28px;line-height:28px;color:#1f2d3a;letter-spacing:0.3px;">9</div>
<div class="t" style="left:1351.5px;top:1477.5px;font-size:28px;line-height:28px;color:#217050;letter-spacing:0.3px;">0</div>
<div class="t" style="left:1694.5px;top:1477.5px;font-size:28px;line-height:28px;color:#1f2d3a;letter-spacing:0.3px;">3</div>
<div class="t" style="left:2043.5px;top:1477.5px;font-size:28px;line-height:28px;color:#a53337;letter-spacing:0.3px;">0</div>
<div class="t" style="left:2306.5px;top:1477.5px;font-size:28px;line-height:28px;color:#1f2d3a;letter-spacing:0.3px;">6</div>
<div class="t" style="left:2573.5px;top:1477.5px;font-size:28px;line-height:28px;color:#a53337;letter-spacing:0.3px;">0,00 €</div>
<div class="t" style="left:2917.5px;top:1477.5px;font-size:28px;line-height:28px;color:#1f2d3a;letter-spacing:0.3px;">1.419,03 €</div>
<div class="t" style="left:3264.5px;top:1477.5px;font-size:28px;line-height:28px;color:#1f2d3a;letter-spacing:0.3px;">0,00 %</div>
<div class="t" style="left:3544.5px;top:1477.5px;font-size:28px;line-height:28px;color:#1f2d3a;letter-spacing:0.3px;">0,00 %</div>
<div class="t" style="left:187.0px;top:1567.4px;font-size:28.5px;line-height:28.5px;color:#1f2d3a;letter-spacing:0.5px;">September 2026</div>
<div class="t" style="left:664.5px;top:1568.2px;font-size:28px;line-height:28px;color:#a53337;letter-spacing:0.3px;">5</div>
<div class="t" style="left:1004.5px;top:1568.2px;font-size:28px;line-height:28px;color:#1f2d3a;letter-spacing:0.3px;">13</div>
<div class="t" style="left:1351.5px;top:1568.2px;font-size:28px;line-height:28px;color:#a53337;letter-spacing:0.3px;">5</div>
<div class="t" style="left:1694.5px;top:1568.2px;font-size:28px;line-height:28px;color:#1f2d3a;letter-spacing:0.3px;">0</div>
<div class="t" style="left:2043.5px;top:1568.2px;font-size:28px;line-height:28px;color:#a53337;letter-spacing:0.3px;">0</div>
<div class="t" style="left:2306.5px;top:1568.2px;font-size:28px;line-height:28px;color:#1f2d3a;letter-spacing:0.3px;">13</div>
<div class="t" style="left:2573.5px;top:1568.2px;font-size:28px;line-height:28px;color:#a53337;letter-spacing:0.3px;">0,00 €</div>
<div class="t" style="left:2917.5px;top:1568.2px;font-size:28px;line-height:28px;color:#1f2d3a;letter-spacing:0.3px;">2.478,47 €</div>
<div class="t" style="left:3264.5px;top:1568.2px;font-size:28px;line-height:28px;color:#a53337;letter-spacing:0.3px;">0,00 %</div>
<div class="t" style="left:3544.5px;top:1568.2px;font-size:28px;line-height:28px;color:#1f2d3a;letter-spacing:0.3px;">4,06 %</div>
<div class="t" style="left:187.0px;top:1658.1px;font-size:28.5px;line-height:28.5px;color:#1f2d3a;letter-spacing:0.5px;">Oktober 2026</div>
<div class="t" style="left:664.5px;top:1658.8px;font-size:28px;line-height:28px;color:#a53337;letter-spacing:0.3px;">4</div>
<div class="t" style="left:1004.5px;top:1658.8px;font-size:28px;line-height:28px;color:#1f2d3a;letter-spacing:0.3px;">7</div>
<div class="t" style="left:1351.5px;top:1658.8px;font-size:28px;line-height:28px;color:#1f2d3a;letter-spacing:0.3px;">0</div>
<div class="t" style="left:1694.5px;top:1658.8px;font-size:28px;line-height:28px;color:#1f2d3a;letter-spacing:0.3px;">0</div>
<div class="t" style="left:2043.5px;top:1658.8px;font-size:28px;line-height:28px;color:#a53337;letter-spacing:0.3px;">4</div>
<div class="t" style="left:2306.5px;top:1658.8px;font-size:28px;line-height:28px;color:#1f2d3a;letter-spacing:0.3px;">7</div>
<div class="t" style="left:2573.5px;top:1658.8px;font-size:28px;line-height:28px;color:#a53337;letter-spacing:0.3px;">1.260,82 €</div>
<div class="t" style="left:2917.5px;top:1658.8px;font-size:28px;line-height:28px;color:#1f2d3a;letter-spacing:0.3px;">1.375,01 €</div>
<div class="t" style="left:3264.5px;top:1658.8px;font-size:28px;line-height:28px;color:#217050;letter-spacing:0.3px;">162,05 %</div>
<div class="t" style="left:3544.5px;top:1658.8px;font-size:28px;line-height:28px;color:#1f2d3a;letter-spacing:0.3px;">-6,25 %</div>
<div class="b" style="left:155px;top:1708px;width:3628px;height:87px;background:#eff0f4;border-radius:0 0 0 18px;"></div>
<div class="t semib" style="left:186.5px;top:1737.3px;font-size:28px;line-height:28px;color:#364654;letter-spacing:0.3px;">Gesamt:</div>
<div class="t semib" style="left:664.5px;top:1737.3px;font-size:28px;line-height:28px;color:#364654;letter-spacing:0.3px;">154</div>
<div class="t semib" style="left:1004.5px;top:1737.3px;font-size:28px;line-height:28px;color:#364654;letter-spacing:0.3px;">143</div>
<div class="t semib" style="left:1351.5px;top:1737.3px;font-size:28px;line-height:28px;color:#364654;letter-spacing:0.3px;">16</div>
<div class="t semib" style="left:1694.5px;top:1737.3px;font-size:28px;line-height:28px;color:#364654;letter-spacing:0.3px;">85</div>
<div class="t semib" style="left:2043.5px;top:1737.3px;font-size:28px;line-height:28px;color:#364654;letter-spacing:0.3px;">138</div>
<div class="t semib" style="left:2306.5px;top:1737.3px;font-size:28px;line-height:28px;color:#364654;letter-spacing:0.3px;">58</div>
<div class="t semib" style="left:2573.5px;top:1737.3px;font-size:28px;line-height:28px;color:#364654;letter-spacing:0.3px;">23.513,33 €</div>
<div class="t semib" style="left:2917.5px;top:1737.3px;font-size:28px;line-height:28px;color:#364654;letter-spacing:0.3px;">10.579,36 €</div>
<div class="t semib" style="left:3264.5px;top:1737.3px;font-size:28px;line-height:28px;color:#364654;letter-spacing:0.3px;">-0,23 %</div>
<div class="t semib" style="left:3544.5px;top:1737.3px;font-size:28px;line-height:28px;color:#364654;letter-spacing:0.3px;">1,10 %</div>
<div class="b" style="left:3782px;top:643px;width:24px;height:1152px;background:#dedede;border-radius:0 0 18px 0;"></div>
<div class="b" style="left:3783px;top:643px;width:23px;height:987px;background:#8f8f8f;border-radius:5px;"></div>
</body></html>
